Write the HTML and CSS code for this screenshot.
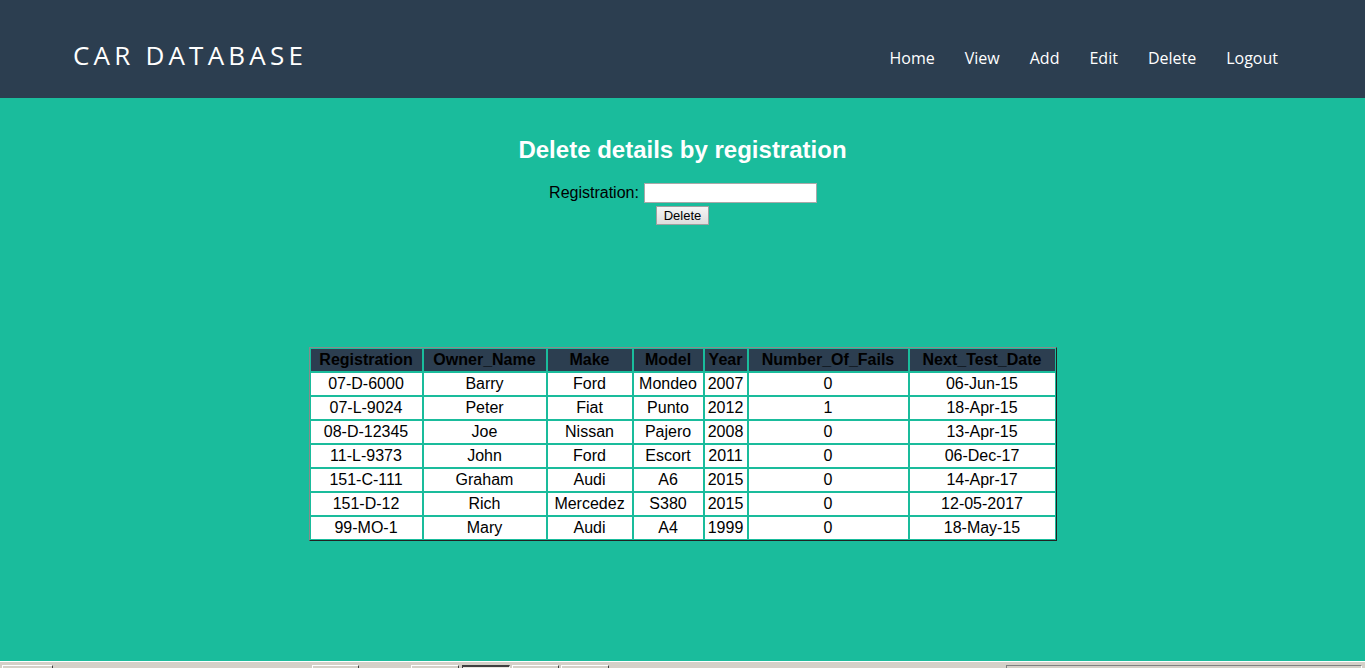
FILE: index.html
```html
<!DOCTYPE html>
<html>
<head>
<meta charset="utf-8">
<title>Car Database</title>
<link rel="stylesheet" href="styles.css">
</head>
<body>
<div class="page">
  <header class="topbar">
    <div class="brand">CAR DATABASE</div>
    <nav class="nav">
      <a href="#">Home</a>
      <a href="#">View</a>
      <a href="#">Add</a>
      <a href="#">Edit</a>
      <a href="#">Delete</a>
      <a href="#">Logout</a>
    </nav>
  </header>
  <main class="main">
    <h2 class="title">Delete details by registration</h2>
    <form class="form">
      <div class="row"><label for="reg">Registration:</label> <input id="reg" type="text" class="field"></div>
      <button type="button" class="btn">Delete</button>
    </form>
    <table class="cars">
      <colgroup>
        <col class="c1"><col class="c2"><col class="c3"><col class="c4"><col class="c5"><col class="c6"><col class="c7">
      </colgroup>
      <thead>
        <tr><th>Registration</th><th>Owner_Name</th><th>Make</th><th>Model</th><th>Year</th><th>Number_Of_Fails</th><th>Next_Test_Date</th></tr>
      </thead>
      <tbody>
        <tr><td>07-D-6000</td><td>Barry</td><td>Ford</td><td>Mondeo</td><td>2007</td><td>0</td><td>06-Jun-15</td></tr>
        <tr><td>07-L-9024</td><td>Peter</td><td>Fiat</td><td>Punto</td><td>2012</td><td>1</td><td>18-Apr-15</td></tr>
        <tr><td>08-D-12345</td><td>Joe</td><td>Nissan</td><td>Pajero</td><td>2008</td><td>0</td><td>13-Apr-15</td></tr>
        <tr><td>11-L-9373</td><td>John</td><td>Ford</td><td>Escort</td><td>2011</td><td>0</td><td>06-Dec-17</td></tr>
        <tr><td>151-C-111</td><td>Graham</td><td>Audi</td><td>A6</td><td>2015</td><td>0</td><td>14-Apr-17</td></tr>
        <tr><td>151-D-12</td><td>Rich</td><td>Mercedez</td><td>S380</td><td>2015</td><td>0</td><td>12-05-2017</td></tr>
        <tr><td>99-MO-1</td><td>Mary</td><td>Audi</td><td>A4</td><td>1999</td><td>0</td><td>18-May-15</td></tr>
      </tbody>
    </table>
  </main>
  <div class="strip">
    <span class="sb sb1"></span>
    <span class="sb sb2"></span>
    <span class="sb sb3"></span>
    <span class="sb sb4 pressed"></span>
    <span class="sb sb5"></span>
    <span class="sb sb6"></span>
    <span class="sb sb7 sunk"></span>
  </div>
</div>
</body>
</html>
```
FILE: styles.css
```css
* { box-sizing: border-box; }
html, body { margin: 0; padding: 0; }
body { font-family: "Liberation Sans", Arial, sans-serif; color: #000; background: #1abc9c; }
.page { height: 668px; display: flex; flex-direction: column; overflow: hidden; }

.topbar {
  height: 98px;
  flex: none;
  background: #2c3e50;
  display: flex;
  align-items: center;
  justify-content: space-between;
  padding: 14px 72px 0 73px;
}
.brand {
  font-family: "Open Sans", sans-serif;
  font-size: 26px;
  letter-spacing: 4.2px;
  color: #fff;
  margin-top: -2px;
}
.nav { display: flex; margin-top: 3px; }
.nav a {
  font-family: "Open Sans", sans-serif;
  font-size: 16px;
  color: #fff;
  text-decoration: none;
  padding: 0 15px;
}

.main { flex: 1; display: flex; flex-direction: column; align-items: center; }
.title {
  margin: 38px 0 0;
  font-size: 24px;
  font-weight: bold;
  color: #fff;
  line-height: 28px;
}
.form { margin-top: 19px; display: flex; flex-direction: column; align-items: center; }
.row { display: flex; align-items: center; font-size: 16px; height: 20px; }
.row label { margin-right: 6px; position: relative; left: 1px; }
.field {
  width: 173px; height: 20px;
  border: 1px solid #a9a9a9;
  background: #fff;
  padding: 0 2px;
  margin: 0;
}
.btn {
  margin-top: 3px;
  width: 53px; height: 19px;
  font-family: "Liberation Sans", Arial, sans-serif;
  font-size: 13px;
  padding: 0;
  border: 1px solid #a0a0a0;
  background: linear-gradient(#f6f6f6, #dddddd);
  color: #000;
}

.cars {
  margin-top: 122px;
  width: 748px;
  table-layout: fixed;
  border-collapse: separate;
  border-spacing: 0;
  border: 1px solid;
  border-color: #8a8a8a #222 #222 #8a8a8a;
  font-size: 16px;
}
.c1 { width: 113px; } .c2 { width: 124px; } .c3 { width: 86px; } .c4 { width: 71px; }
.c5 { width: 44px; } .c6 { width: 161px; } .c7 { width: 147px; }
.cars th, .cars td {
  border: 1px solid #1abc9c;
  padding: 2px 0;
  line-height: 18px;
  text-align: center;
  white-space: nowrap;
  overflow: hidden;
}
.cars th { background: #2c3e50; color: #000; font-weight: bold; }
.cars td { background: #fff; }

.strip {
  height: 7px;
  flex: none;
  background: #d4d0c8;
  border-top: 1px solid #fff;
  position: relative;
}
.sb {
  position: absolute;
  top: 3px;
  height: 6px;
  border-top: 1px solid #fff;
  border-left: 1px solid #fff;
  border-right: 1px solid #404040;
}
.sb1 { left: 2px; width: 51px; }
.sb2 { left: 312px; width: 47px; }
.sb3 { left: 411px; width: 48px; }
.sb4 { left: 462px; width: 48px; }
.sb5 { left: 512px; width: 47px; }
.sb6 { left: 561px; width: 48px; }
.sb7 { left: 1006px; width: 356px; }
.pressed { border-top: 2px solid #404040; border-left-color: #404040; border-right-color: #fff; background: #e8e6e0; }
.sunk { border-top: 1px solid #808080; border-left-color: #808080; border-right-color: #fff; }
```
